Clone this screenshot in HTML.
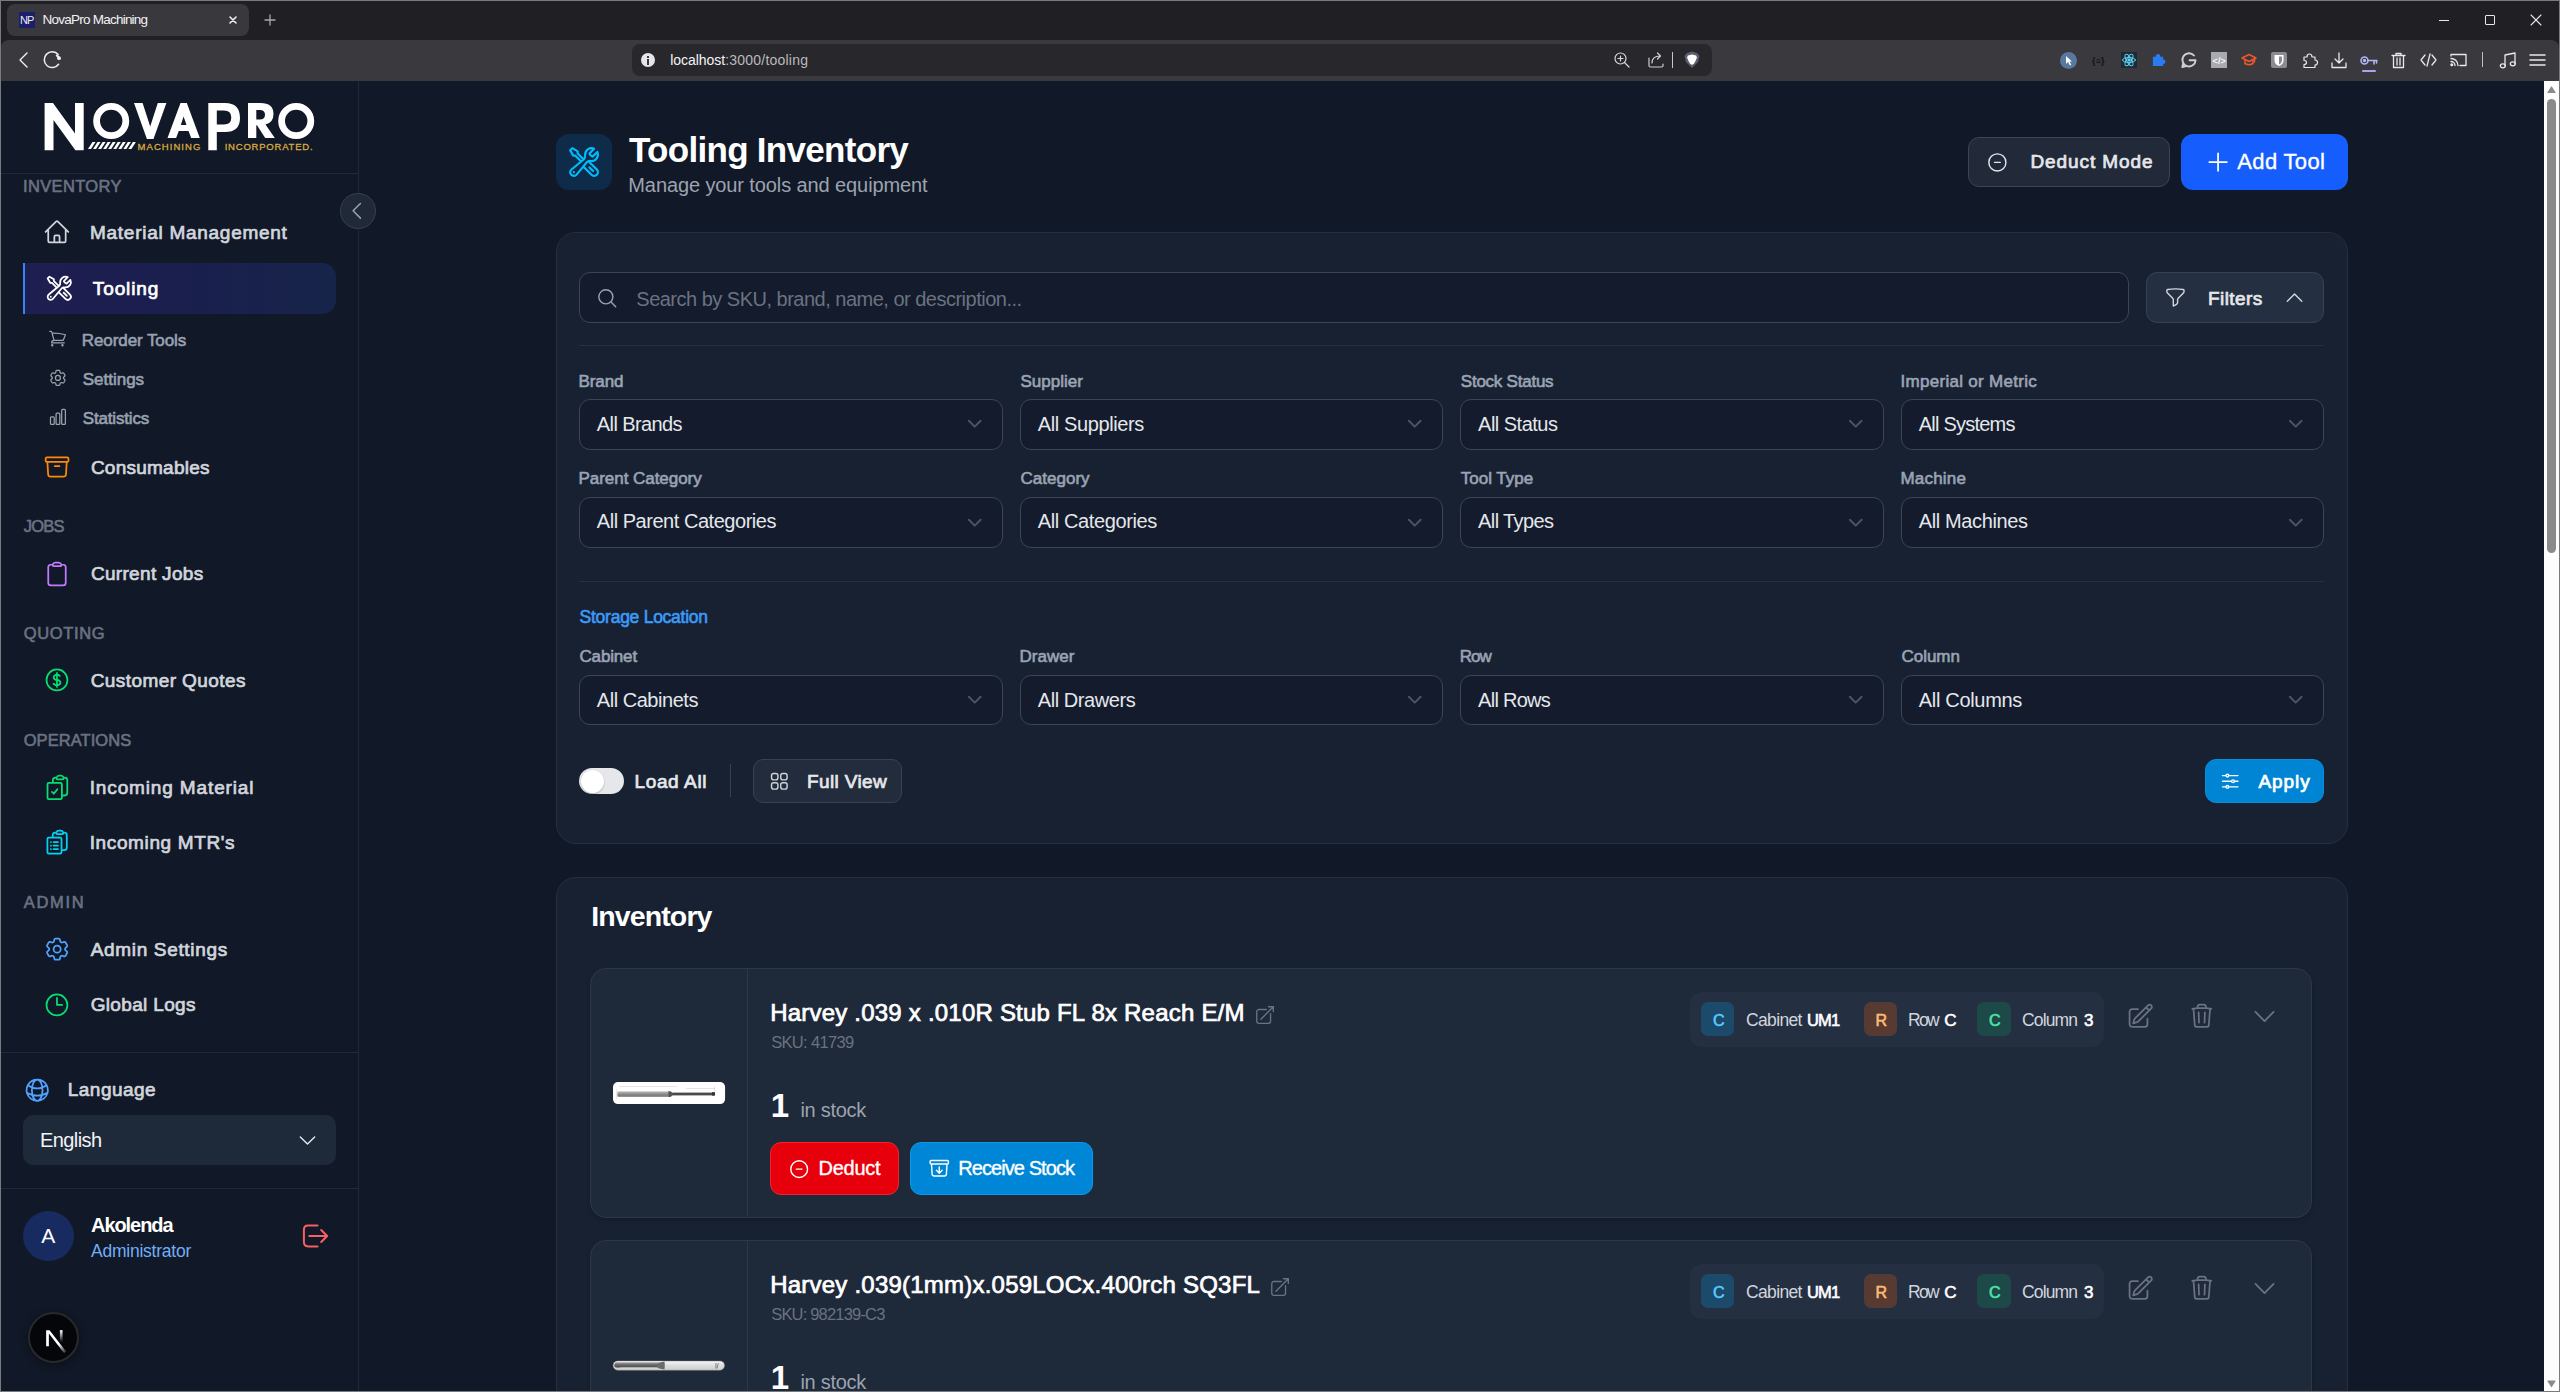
<!DOCTYPE html>
<html><head><meta charset="utf-8"><title>NovaPro Machining</title>
<style>
html,body{margin:0;padding:0;width:2560px;height:1392px;overflow:hidden;background:#111827;font-family:'Liberation Sans',sans-serif;}
.a{position:absolute;box-sizing:border-box;}
.t{white-space:pre;}
svg.a{overflow:visible;}
</style></head><body>
<div class="a " style="left:556.2px;top:134px;width:55.7px;height:55.6px;background:#0e2b4a;border-radius:13px;"></div>
<svg class="a" style="left:566.74px;top:144.59px;width:34.11px;height:34.11px;color:#00bcff;" viewBox="0 0 24 24" fill="none" stroke="currentColor" stroke-width="1.5" stroke-linecap="round" stroke-linejoin="round"><path d="M11.42 15.17 17.25 21A2.652 2.652 0 0 0 21 17.25l-5.877-5.877M11.42 15.17l2.496-3.03c.317-.384.74-.626 1.208-.766M11.42 15.17l-4.655 5.653a2.548 2.548 0 1 1-3.586-3.586l6.837-5.63m5.108-.233c.55-.164 1.163-.188 1.743-.14a4.5 4.5 0 0 0 4.486-6.336l-3.276 3.277a3.004 3.004 0 0 1-2.25-2.25l3.276-3.276a4.5 4.5 0 0 0-6.336 4.486c.091 1.076-.071 2.264-.904 2.95l-.102.085m-1.745 1.437L5.909 7.5H4.5L2.25 3.75l1.5-1.5L7.5 4.5v1.409l4.26 4.26m-1.745 1.437 1.745-1.437m6.615 8.206L15.75 15.75M4.867 19.125h.008v.008h-.008v-.008Z"/></svg>
<div class="a t" style="left:629.00px;top:132px;font-size:35px;line-height:35px;font-weight:700;color:#ffffff;font-family:'Liberation Sans',sans-serif;letter-spacing:-0.703px;">Tooling Inventory</div>
<div class="a t" style="left:628.30px;top:175px;font-size:20px;line-height:20px;font-weight:400;color:#9ca3af;font-family:'Liberation Sans',sans-serif;letter-spacing:-0.102px;">Manage your tools and equipment</div>
<div class="a " style="left:1968.2px;top:137px;width:201.5px;height:50px;background:#222a3a;border:1px solid #3a4555;border-radius:11px;"></div>
<svg class="a" style="left:1985.82px;top:150.72px;width:22.77px;height:22.77px;color:#e5e7eb;" viewBox="0 0 24 24" fill="none" stroke="currentColor" stroke-width="1.5" stroke-linecap="round" stroke-linejoin="round"><path d="M15 12H9m12 0a9 9 0 1 1-18 0 9 9 0 0 1 18 0Z"/></svg>
<div class="a t" style="left:2030.40px;top:152px;font-size:19.0px;line-height:19.0px;font-weight:400;color:#e5e7eb;font-family:'Liberation Sans',sans-serif;-webkit-text-stroke:0.72px #e5e7eb;letter-spacing:0.926px;">Deduct Mode</div>
<div class="a " style="left:2181px;top:134px;width:167px;height:56px;background:#155dfc;border-radius:12px;"></div>
<svg class="a" style="left:2203.88px;top:148.43px;width:28.15px;height:28.15px;color:#ffffff;" viewBox="0 0 24 24" fill="none" stroke="currentColor" stroke-width="1.5" stroke-linecap="round" stroke-linejoin="round"><path d="M12 4.5v15m7.5-7.5h-15"/></svg>
<div class="a t" style="left:2237.30px;top:151px;font-size:22px;line-height:22px;font-weight:400;color:#ffffff;font-family:'Liberation Sans',sans-serif;-webkit-text-stroke:0.35px #ffffff;letter-spacing:0.339px;">Add Tool</div>
<div class="a " style="left:556px;top:232px;width:1792px;height:612px;background:#182131;border:1px solid #252f3f;border-radius:20px;"></div>
<div class="a " style="left:579.2px;top:272px;width:1549.8px;height:51px;background:#131b2c;border:1px solid #3a4555;border-radius:11px;"></div>
<svg class="a" style="left:595.84px;top:286.84px;width:22.52px;height:22.52px;color:#9ca3af;" viewBox="0 0 24 24" fill="none" stroke="currentColor" stroke-width="1.5" stroke-linecap="round" stroke-linejoin="round"><path d="m21 21-5.197-5.197m0 0A7.5 7.5 0 1 0 5.196 5.196a7.5 7.5 0 0 0 10.607 10.607Z"/></svg>
<div class="a t" style="left:636.30px;top:289px;font-size:20px;line-height:20px;font-weight:400;color:#6b7280;font-family:'Liberation Sans',sans-serif;letter-spacing:-0.505px;">Search by SKU, brand, name, or description...</div>
<div class="a " style="left:2146.2px;top:272px;width:177.6px;height:51px;background:#243041;border:1px solid #374151;border-radius:11px;"></div>
<svg class="a" style="left:2163.55px;top:285.65px;width:22.89px;height:22.89px;color:#d1d5db;" viewBox="0 0 24 24" fill="none" stroke="currentColor" stroke-width="1.5" stroke-linecap="round" stroke-linejoin="round"><path d="M12 3c2.755 0 5.455.232 8.083.678.533.09.917.556.917 1.096v1.044a2.25 2.25 0 0 1-.659 1.591l-5.432 5.432a2.25 2.25 0 0 0-.659 1.591v2.927a2.25 2.25 0 0 1-1.244 2.013L9.75 21v-6.568a2.25 2.25 0 0 0-.659-1.591L3.659 7.409A2.25 2.25 0 0 1 3 5.818V4.774c0-.54.384-1.006.917-1.096A48.32 48.32 0 0 1 12 3Z"/></svg>
<div class="a t" style="left:2208.00px;top:289px;font-size:19.0px;line-height:19.0px;font-weight:400;color:#e5e7eb;font-family:'Liberation Sans',sans-serif;-webkit-text-stroke:0.72px #e5e7eb;letter-spacing:0.413px;">Filters</div>
<svg class="a" style="left:2283.45px;top:285.75px;width:23.1px;height:23.1px;color:#d1d5db;" viewBox="0 0 24 24" fill="none" stroke="currentColor" stroke-width="1.5" stroke-linecap="round" stroke-linejoin="round"><path d="m4.5 15.75 7.5-7.5 7.5 7.5"/></svg>
<div class="a " style="left:579px;top:345px;width:1745px;height:1px;background:#263041;"></div>
<div class="a t" style="left:578.50px;top:373px;font-size:17.0px;line-height:17.0px;font-weight:400;color:#9aa4b4;font-family:'Liberation Sans',sans-serif;-webkit-text-stroke:0.61px #9aa4b4;letter-spacing:-0.102px;">Brand</div>
<div class="a " style="left:579px;top:399.2px;width:424px;height:50.5px;background:#131b2c;border:1px solid #3a4555;border-radius:11px;"></div>
<div class="a t" style="left:596.80px;top:414px;font-size:20px;line-height:20px;font-weight:400;color:#e5e7eb;font-family:'Liberation Sans',sans-serif;letter-spacing:-0.595px;">All Brands</div>
<svg class="a" style="left:962.76px;top:412.46px;width:23.49px;height:23.49px;color:#4b5563;" viewBox="0 0 24 24" fill="none" stroke="currentColor" stroke-width="2" stroke-linecap="round" stroke-linejoin="round"><path d="m6 9 6 6 6-6"/></svg>
<div class="a t" style="left:1020.50px;top:373px;font-size:17.0px;line-height:17.0px;font-weight:400;color:#9aa4b4;font-family:'Liberation Sans',sans-serif;-webkit-text-stroke:0.61px #9aa4b4;letter-spacing:0.013px;">Supplier</div>
<div class="a " style="left:1020px;top:399.2px;width:423px;height:50.5px;background:#131b2c;border:1px solid #3a4555;border-radius:11px;"></div>
<div class="a t" style="left:1037.80px;top:414px;font-size:20px;line-height:20px;font-weight:400;color:#e5e7eb;font-family:'Liberation Sans',sans-serif;letter-spacing:-0.389px;">All Suppliers</div>
<svg class="a" style="left:1402.76px;top:412.46px;width:23.49px;height:23.49px;color:#4b5563;" viewBox="0 0 24 24" fill="none" stroke="currentColor" stroke-width="2" stroke-linecap="round" stroke-linejoin="round"><path d="m6 9 6 6 6-6"/></svg>
<div class="a t" style="left:1460.80px;top:373px;font-size:17.0px;line-height:17.0px;font-weight:400;color:#9aa4b4;font-family:'Liberation Sans',sans-serif;-webkit-text-stroke:0.61px #9aa4b4;letter-spacing:-0.239px;">Stock Status</div>
<div class="a " style="left:1460.3px;top:399.2px;width:423.7px;height:50.5px;background:#131b2c;border:1px solid #3a4555;border-radius:11px;"></div>
<div class="a t" style="left:1478.10px;top:414px;font-size:20px;line-height:20px;font-weight:400;color:#e5e7eb;font-family:'Liberation Sans',sans-serif;letter-spacing:-0.520px;">All Status</div>
<svg class="a" style="left:1843.76px;top:412.46px;width:23.49px;height:23.49px;color:#4b5563;" viewBox="0 0 24 24" fill="none" stroke="currentColor" stroke-width="2" stroke-linecap="round" stroke-linejoin="round"><path d="m6 9 6 6 6-6"/></svg>
<div class="a t" style="left:1900.50px;top:373px;font-size:17.0px;line-height:17.0px;font-weight:400;color:#9aa4b4;font-family:'Liberation Sans',sans-serif;-webkit-text-stroke:0.61px #9aa4b4;letter-spacing:0.294px;">Imperial or Metric</div>
<div class="a " style="left:1901px;top:399.2px;width:423px;height:50.5px;background:#131b2c;border:1px solid #3a4555;border-radius:11px;"></div>
<div class="a t" style="left:1918.80px;top:414px;font-size:20px;line-height:20px;font-weight:400;color:#e5e7eb;font-family:'Liberation Sans',sans-serif;letter-spacing:-0.786px;">All Systems</div>
<svg class="a" style="left:2283.76px;top:412.46px;width:23.49px;height:23.49px;color:#4b5563;" viewBox="0 0 24 24" fill="none" stroke="currentColor" stroke-width="2" stroke-linecap="round" stroke-linejoin="round"><path d="m6 9 6 6 6-6"/></svg>
<div class="a t" style="left:578.50px;top:470px;font-size:17.0px;line-height:17.0px;font-weight:400;color:#9aa4b4;font-family:'Liberation Sans',sans-serif;-webkit-text-stroke:0.61px #9aa4b4;letter-spacing:-0.042px;">Parent Category</div>
<div class="a " style="left:579px;top:497.3px;width:424px;height:50.3px;background:#131b2c;border:1px solid #3a4555;border-radius:11px;"></div>
<div class="a t" style="left:596.80px;top:511px;font-size:20px;line-height:20px;font-weight:400;color:#e5e7eb;font-family:'Liberation Sans',sans-serif;letter-spacing:-0.464px;">All Parent Categories</div>
<svg class="a" style="left:962.76px;top:510.56px;width:23.49px;height:23.49px;color:#4b5563;" viewBox="0 0 24 24" fill="none" stroke="currentColor" stroke-width="2" stroke-linecap="round" stroke-linejoin="round"><path d="m6 9 6 6 6-6"/></svg>
<div class="a t" style="left:1020.50px;top:470px;font-size:17.0px;line-height:17.0px;font-weight:400;color:#9aa4b4;font-family:'Liberation Sans',sans-serif;-webkit-text-stroke:0.61px #9aa4b4;letter-spacing:0.017px;">Category</div>
<div class="a " style="left:1020px;top:497.3px;width:423px;height:50.3px;background:#131b2c;border:1px solid #3a4555;border-radius:11px;"></div>
<div class="a t" style="left:1037.80px;top:511px;font-size:20px;line-height:20px;font-weight:400;color:#e5e7eb;font-family:'Liberation Sans',sans-serif;letter-spacing:-0.392px;">All Categories</div>
<svg class="a" style="left:1402.76px;top:510.56px;width:23.49px;height:23.49px;color:#4b5563;" viewBox="0 0 24 24" fill="none" stroke="currentColor" stroke-width="2" stroke-linecap="round" stroke-linejoin="round"><path d="m6 9 6 6 6-6"/></svg>
<div class="a t" style="left:1460.80px;top:470px;font-size:17.0px;line-height:17.0px;font-weight:400;color:#9aa4b4;font-family:'Liberation Sans',sans-serif;-webkit-text-stroke:0.61px #9aa4b4;letter-spacing:-0.014px;">Tool Type</div>
<div class="a " style="left:1460.3px;top:497.3px;width:423.7px;height:50.3px;background:#131b2c;border:1px solid #3a4555;border-radius:11px;"></div>
<div class="a t" style="left:1478.10px;top:511px;font-size:20px;line-height:20px;font-weight:400;color:#e5e7eb;font-family:'Liberation Sans',sans-serif;letter-spacing:-0.618px;">All Types</div>
<svg class="a" style="left:1843.76px;top:510.56px;width:23.49px;height:23.49px;color:#4b5563;" viewBox="0 0 24 24" fill="none" stroke="currentColor" stroke-width="2" stroke-linecap="round" stroke-linejoin="round"><path d="m6 9 6 6 6-6"/></svg>
<div class="a t" style="left:1900.50px;top:470px;font-size:17.0px;line-height:17.0px;font-weight:400;color:#9aa4b4;font-family:'Liberation Sans',sans-serif;-webkit-text-stroke:0.61px #9aa4b4;letter-spacing:0.183px;">Machine</div>
<div class="a " style="left:1901px;top:497.3px;width:423px;height:50.3px;background:#131b2c;border:1px solid #3a4555;border-radius:11px;"></div>
<div class="a t" style="left:1918.80px;top:511px;font-size:20px;line-height:20px;font-weight:400;color:#e5e7eb;font-family:'Liberation Sans',sans-serif;letter-spacing:-0.380px;">All Machines</div>
<svg class="a" style="left:2283.76px;top:510.56px;width:23.49px;height:23.49px;color:#4b5563;" viewBox="0 0 24 24" fill="none" stroke="currentColor" stroke-width="2" stroke-linecap="round" stroke-linejoin="round"><path d="m6 9 6 6 6-6"/></svg>
<div class="a " style="left:579px;top:581px;width:1745px;height:1px;background:#263041;"></div>
<div class="a t" style="left:579.60px;top:609px;font-size:17.5px;line-height:17.5px;font-weight:400;color:#3b9bf8;font-family:'Liberation Sans',sans-serif;-webkit-text-stroke:0.61px #3b9bf8;letter-spacing:-0.259px;">Storage Location</div>
<div class="a t" style="left:579.50px;top:648px;font-size:17.0px;line-height:17.0px;font-weight:400;color:#9aa4b4;font-family:'Liberation Sans',sans-serif;-webkit-text-stroke:0.61px #9aa4b4;letter-spacing:-0.162px;">Cabinet</div>
<div class="a " style="left:579px;top:675px;width:424px;height:49.7px;background:#131b2c;border:1px solid #3a4555;border-radius:11px;"></div>
<div class="a t" style="left:596.80px;top:690px;font-size:20px;line-height:20px;font-weight:400;color:#e5e7eb;font-family:'Liberation Sans',sans-serif;letter-spacing:-0.465px;">All Cabinets</div>
<svg class="a" style="left:962.76px;top:688.26px;width:23.49px;height:23.49px;color:#4b5563;" viewBox="0 0 24 24" fill="none" stroke="currentColor" stroke-width="2" stroke-linecap="round" stroke-linejoin="round"><path d="m6 9 6 6 6-6"/></svg>
<div class="a t" style="left:1019.50px;top:648px;font-size:17.0px;line-height:17.0px;font-weight:400;color:#9aa4b4;font-family:'Liberation Sans',sans-serif;-webkit-text-stroke:0.61px #9aa4b4;letter-spacing:0.015px;">Drawer</div>
<div class="a " style="left:1020px;top:675px;width:423px;height:49.7px;background:#131b2c;border:1px solid #3a4555;border-radius:11px;"></div>
<div class="a t" style="left:1037.80px;top:690px;font-size:20px;line-height:20px;font-weight:400;color:#e5e7eb;font-family:'Liberation Sans',sans-serif;letter-spacing:-0.434px;">All Drawers</div>
<svg class="a" style="left:1402.76px;top:688.26px;width:23.49px;height:23.49px;color:#4b5563;" viewBox="0 0 24 24" fill="none" stroke="currentColor" stroke-width="2" stroke-linecap="round" stroke-linejoin="round"><path d="m6 9 6 6 6-6"/></svg>
<div class="a t" style="left:1459.80px;top:648px;font-size:17.0px;line-height:17.0px;font-weight:400;color:#9aa4b4;font-family:'Liberation Sans',sans-serif;-webkit-text-stroke:0.61px #9aa4b4;letter-spacing:-1.016px;">Row</div>
<div class="a " style="left:1460.3px;top:675px;width:423.7px;height:49.7px;background:#131b2c;border:1px solid #3a4555;border-radius:11px;"></div>
<div class="a t" style="left:1478.10px;top:690px;font-size:20px;line-height:20px;font-weight:400;color:#e5e7eb;font-family:'Liberation Sans',sans-serif;letter-spacing:-0.728px;">All Rows</div>
<svg class="a" style="left:1843.76px;top:688.26px;width:23.49px;height:23.49px;color:#4b5563;" viewBox="0 0 24 24" fill="none" stroke="currentColor" stroke-width="2" stroke-linecap="round" stroke-linejoin="round"><path d="m6 9 6 6 6-6"/></svg>
<div class="a t" style="left:1901.50px;top:648px;font-size:17.0px;line-height:17.0px;font-weight:400;color:#9aa4b4;font-family:'Liberation Sans',sans-serif;-webkit-text-stroke:0.61px #9aa4b4;letter-spacing:-0.025px;">Column</div>
<div class="a " style="left:1901px;top:675px;width:423px;height:49.7px;background:#131b2c;border:1px solid #3a4555;border-radius:11px;"></div>
<div class="a t" style="left:1918.80px;top:690px;font-size:20px;line-height:20px;font-weight:400;color:#e5e7eb;font-family:'Liberation Sans',sans-serif;letter-spacing:-0.320px;">All Columns</div>
<svg class="a" style="left:2283.76px;top:688.26px;width:23.49px;height:23.49px;color:#4b5563;" viewBox="0 0 24 24" fill="none" stroke="currentColor" stroke-width="2" stroke-linecap="round" stroke-linejoin="round"><path d="m6 9 6 6 6-6"/></svg>
<div class="a " style="left:579.2px;top:768.2px;width:44.6px;height:25.5px;background:#e5e7eb;border-radius:13px;"></div>
<div class="a " style="left:580.5px;top:769.5px;width:23px;height:23px;background:#ffffff;border-radius:50%;box-shadow:0 1px 2px rgba(0,0,0,.25);"></div>
<div class="a t" style="left:634.50px;top:772px;font-size:19.0px;line-height:19.0px;font-weight:400;color:#e5e7eb;font-family:'Liberation Sans',sans-serif;-webkit-text-stroke:0.72px #e5e7eb;letter-spacing:0.623px;">Load All</div>
<div class="a " style="left:729.5px;top:764px;width:1px;height:33.3px;background:#374151;"></div>
<div class="a " style="left:753.2px;top:759px;width:148.4px;height:43.7px;background:#222c3c;border:1px solid #374151;border-radius:10px;"></div>
<svg class="a" style="left:768.02px;top:770.22px;width:22.67px;height:22.67px;color:#d1d5db;" viewBox="0 0 24 24" fill="none" stroke="currentColor" stroke-width="1.5" stroke-linecap="round" stroke-linejoin="round"><path d="M3.75 6A2.25 2.25 0 0 1 6 3.75h2.25A2.25 2.25 0 0 1 10.5 6v2.25a2.25 2.25 0 0 1-2.25 2.25H6a2.25 2.25 0 0 1-2.25-2.25V6ZM3.75 15.75A2.25 2.25 0 0 1 6 13.5h2.25a2.25 2.25 0 0 1 2.25 2.25V18a2.25 2.25 0 0 1-2.25 2.25H6A2.25 2.25 0 0 1 3.75 18v-2.25ZM13.5 6a2.25 2.25 0 0 1 2.25-2.25H18A2.25 2.25 0 0 1 20.25 6v2.25A2.25 2.25 0 0 1 18 10.5h-2.25a2.25 2.25 0 0 1-2.25-2.25V6ZM13.5 15.75a2.25 2.25 0 0 1 2.25-2.25H18a2.25 2.25 0 0 1 2.25 2.25V18A2.25 2.25 0 0 1 18 20.25h-2.25A2.25 2.25 0 0 1 13.5 18v-2.25Z"/></svg>
<div class="a t" style="left:807.10px;top:772px;font-size:19.0px;line-height:19.0px;font-weight:400;color:#e5e7eb;font-family:'Liberation Sans',sans-serif;-webkit-text-stroke:0.72px #e5e7eb;letter-spacing:0.361px;">Full View</div>
<div class="a " style="left:2205px;top:758.8px;width:119px;height:44.2px;background:#0084d4;border:1px solid #078fdd;border-radius:11px;"></div>
<svg class="a" style="left:2219.06px;top:769.81px;width:22.48px;height:22.48px;color:#ffffff;" viewBox="0 0 24 24" fill="none" stroke="currentColor" stroke-width="1.5" stroke-linecap="round" stroke-linejoin="round"><path d="M10.5 6h9.75M10.5 6a1.5 1.5 0 1 1-3 0m3 0a1.5 1.5 0 1 0-3 0M3.75 6H7.5m3 12h9.75m-9.75 0a1.5 1.5 0 0 1-3 0m3 0a1.5 1.5 0 0 0-3 0m-3.75 0H7.5m9-6h3.75m-3.75 0a1.5 1.5 0 0 1-3 0m3 0a1.5 1.5 0 0 0-3 0m-9.75 0h9.75"/></svg>
<div class="a t" style="left:2258.40px;top:772px;font-size:19.0px;line-height:19.0px;font-weight:400;color:#ffffff;font-family:'Liberation Sans',sans-serif;-webkit-text-stroke:0.72px #ffffff;letter-spacing:0.943px;">Apply</div>
<div class="a " style="left:556.4px;top:877.3px;width:1791.6px;height:600px;background:#182131;border:1px solid #252f3f;border-radius:20px;"></div>
<div class="a t" style="left:591.20px;top:902px;font-size:28.5px;line-height:28.5px;font-weight:700;color:#ffffff;font-family:'Liberation Sans',sans-serif;letter-spacing:-0.878px;">Inventory</div>
<div class="a " style="left:590.4px;top:968px;width:1721.6px;height:250px;background:#1e293a;border:1px solid #2c3749;border-radius:16px;box-shadow:0 2px 4px rgba(0,0,0,.18);"></div>
<div class="a " style="left:746.7px;top:969px;width:1px;height:247px;background:#2c3749;"></div>
<div class="a t" style="left:770.20px;top:1001px;font-size:24.0px;line-height:24.0px;font-weight:400;color:#ffffff;font-family:'Liberation Sans',sans-serif;-webkit-text-stroke:0.72px #ffffff;letter-spacing:0.213px;">Harvey .039 x .010R Stub FL 8x Reach E/M</div>
<svg class="a" style="left:1254.1px;top:1003.95px;width:22.09px;height:22.09px;color:#6b7280;" viewBox="0 0 24 24" fill="none" stroke="currentColor" stroke-width="1.5" stroke-linecap="round" stroke-linejoin="round"><path d="M13.5 6H5.25A2.25 2.25 0 0 0 3 8.25v10.5A2.25 2.25 0 0 0 5.25 21h10.5A2.25 2.25 0 0 0 18 18.75V10.5m-10.5 6L21 3m0 0h-5.25M21 3v5.25"/></svg>
<div class="a t" style="left:771.20px;top:1034px;font-size:16.5px;line-height:16.5px;font-weight:400;color:#6b7280;font-family:'Liberation Sans',sans-serif;letter-spacing:-0.667px;">SKU: 41739</div>
<div class="a t" style="left:770.70px;top:1089px;font-size:33px;line-height:33px;font-weight:700;color:#ffffff;font-family:'Liberation Sans',sans-serif;">1</div>
<div class="a t" style="left:800.40px;top:1100px;font-size:20px;line-height:20px;font-weight:400;color:#9ca3af;font-family:'Liberation Sans',sans-serif;letter-spacing:-0.272px;">in stock</div>
<div class="a " style="left:769.7px;top:1142.3px;width:129px;height:52.3px;background:#e7000b;border:1px solid #f2232d;border-radius:11px;"></div>
<svg class="a" style="left:787.88px;top:1157.63px;width:22.34px;height:22.34px;color:#ffffff;" viewBox="0 0 24 24" fill="none" stroke="currentColor" stroke-width="1.5" stroke-linecap="round" stroke-linejoin="round"><path d="M15 12H9m12 0a9 9 0 1 1-18 0 9 9 0 0 1 18 0Z"/></svg>
<div class="a t" style="left:818.60px;top:1158px;font-size:20px;line-height:20px;font-weight:400;color:#ffffff;font-family:'Liberation Sans',sans-serif;-webkit-text-stroke:0.35px #ffffff;letter-spacing:-0.283px;">Deduct</div>
<div class="a " style="left:910.4px;top:1142.3px;width:183.1px;height:52.3px;background:#0086d6;border:1px solid #0a9bec;border-radius:11px;"></div>
<svg class="a" style="left:927.93px;top:1157.23px;width:22.53px;height:22.53px;color:#ffffff;" viewBox="0 0 24 24" fill="none" stroke="currentColor" stroke-width="1.5" stroke-linecap="round" stroke-linejoin="round"><path d="m20.25 7.5-.625 10.632a2.25 2.25 0 0 1-2.247 2.118H6.622a2.25 2.25 0 0 1-2.247-2.118L3.75 7.5m8.25 3v6.75m0 0-3-3m3 3 3-3M3.375 7.5h17.25c.621 0 1.125-.504 1.125-1.125v-1.5c0-.621-.504-1.125-1.125-1.125H3.375c-.621 0-1.125.504-1.125 1.125v1.5c0 .621.504 1.125 1.125 1.125Z"/></svg>
<div class="a t" style="left:958.30px;top:1158px;font-size:20px;line-height:20px;font-weight:400;color:#ffffff;font-family:'Liberation Sans',sans-serif;-webkit-text-stroke:0.35px #ffffff;letter-spacing:-0.928px;">Receive Stock</div>
<div class="a " style="left:1690px;top:991.5px;width:414.4px;height:55.2px;background:#243042;border-radius:12px;"></div>
<div class="a " style="left:1700.7px;top:1002px;width:33.2px;height:33.8px;background:#1b4a6b;border-radius:7px;"></div>
<div class="a t" style="left:1712.90px;top:1013px;font-size:16.0px;line-height:16.0px;font-weight:400;color:#5ac8fa;font-family:'Liberation Sans',sans-serif;-webkit-text-stroke:0.61px #5ac8fa;">C</div>
<div class="a t" style="left:1746.10px;top:1012px;font-size:17.5px;line-height:17.5px;font-weight:400;color:#d1d5db;font-family:'Liberation Sans',sans-serif;letter-spacing:-0.676px;">Cabinet</div>
<div class="a t" style="left:1806.90px;top:1012px;font-size:16.5px;line-height:16.5px;font-weight:400;color:#ffffff;font-family:'Liberation Sans',sans-serif;-webkit-text-stroke:0.61px #ffffff;letter-spacing:-0.730px;">UM1</div>
<div class="a " style="left:1864px;top:1002px;width:33px;height:33.8px;background:#573a31;border-radius:7px;"></div>
<div class="a t" style="left:1875.40px;top:1013px;font-size:16.0px;line-height:16.0px;font-weight:400;color:#fdba74;font-family:'Liberation Sans',sans-serif;-webkit-text-stroke:0.61px #fdba74;">R</div>
<div class="a t" style="left:1908.00px;top:1012px;font-size:17.5px;line-height:17.5px;font-weight:400;color:#d1d5db;font-family:'Liberation Sans',sans-serif;letter-spacing:-1.685px;">Row</div>
<div class="a t" style="left:1944.20px;top:1012px;font-size:17.0px;line-height:17.0px;font-weight:400;color:#ffffff;font-family:'Liberation Sans',sans-serif;-webkit-text-stroke:0.61px #ffffff;">C</div>
<div class="a " style="left:1977px;top:1002px;width:33.7px;height:33.8px;background:#1d4948;border-radius:7px;"></div>
<div class="a t" style="left:1989.00px;top:1013px;font-size:16.0px;line-height:16.0px;font-weight:400;color:#4fe3a5;font-family:'Liberation Sans',sans-serif;-webkit-text-stroke:0.61px #4fe3a5;">C</div>
<div class="a t" style="left:2022.00px;top:1012px;font-size:17.5px;line-height:17.5px;font-weight:400;color:#d1d5db;font-family:'Liberation Sans',sans-serif;letter-spacing:-0.854px;">Column</div>
<div class="a t" style="left:2084.00px;top:1012px;font-size:17.0px;line-height:17.0px;font-weight:400;color:#ffffff;font-family:'Liberation Sans',sans-serif;-webkit-text-stroke:0.61px #ffffff;">3</div>
<svg class="a" style="left:2126.37px;top:1002.06px;width:28.56px;height:28.56px;color:#6b7280;" viewBox="0 0 24 24" fill="none" stroke="currentColor" stroke-width="1.5" stroke-linecap="round" stroke-linejoin="round"><path d="m16.862 4.487 1.687-1.688a1.875 1.875 0 1 1 2.652 2.652L10.582 16.07a4.5 4.5 0 0 1-1.897 1.13L6 18l.8-2.685a4.5 4.5 0 0 1 1.13-1.897l8.932-8.931Zm0 0L19.5 7.125M18 14v4.75A2.25 2.25 0 0 1 15.75 21H5.25A2.25 2.25 0 0 1 3 18.75V8.25A2.25 2.25 0 0 1 5.25 6H10"/></svg>
<svg class="a" style="left:2188.47px;top:1002.37px;width:27.55px;height:27.55px;color:#6b7280;" viewBox="0 0 24 24" fill="none" stroke="currentColor" stroke-width="1.5" stroke-linecap="round" stroke-linejoin="round"><path d="m14.74 9-.346 9m-4.788 0L9.26 9m9.968-3.21c.342.052.682.107 1.022.166m-1.022-.165L18.16 19.673a2.25 2.25 0 0 1-2.244 2.077H8.084a2.25 2.25 0 0 1-2.244-2.077L4.772 5.79m14.456 0a48.108 48.108 0 0 0-3.478-.397m-12 .562c.34-.059.68-.114 1.022-.165m0 0a48.11 48.11 0 0 1 3.478-.397m7.5 0v-.916c0-1.18-.91-2.164-2.09-2.201a51.964 51.964 0 0 0-3.32 0c-1.18.037-2.09 1.022-2.09 2.201v.916m7.5 0a48.667 48.667 0 0 0-7.5 0"/></svg>
<svg class="a" style="left:2250.18px;top:1001.58px;width:29.04px;height:29.04px;color:#6b7280;" viewBox="0 0 24 24" fill="none" stroke="currentColor" stroke-width="1.5" stroke-linecap="round" stroke-linejoin="round"><path d="m19.5 8.25-7.5 7.5-7.5-7.5"/></svg>
<div class="a " style="left:590.4px;top:1240px;width:1721.6px;height:250px;background:#1e293a;border:1px solid #2c3749;border-radius:16px;box-shadow:0 2px 4px rgba(0,0,0,.18);"></div>
<div class="a " style="left:746.7px;top:1241px;width:1px;height:247px;background:#2c3749;"></div>
<div class="a t" style="left:770.20px;top:1273px;font-size:24.0px;line-height:24.0px;font-weight:400;color:#ffffff;font-family:'Liberation Sans',sans-serif;-webkit-text-stroke:0.72px #ffffff;letter-spacing:0.222px;">Harvey .039(1mm)x.059LOCx.400rch SQ3FL</div>
<svg class="a" style="left:1269.3px;top:1275.95px;width:22.09px;height:22.09px;color:#6b7280;" viewBox="0 0 24 24" fill="none" stroke="currentColor" stroke-width="1.5" stroke-linecap="round" stroke-linejoin="round"><path d="M13.5 6H5.25A2.25 2.25 0 0 0 3 8.25v10.5A2.25 2.25 0 0 0 5.25 21h10.5A2.25 2.25 0 0 0 18 18.75V10.5m-10.5 6L21 3m0 0h-5.25M21 3v5.25"/></svg>
<div class="a t" style="left:771.20px;top:1306px;font-size:16.5px;line-height:16.5px;font-weight:400;color:#6b7280;font-family:'Liberation Sans',sans-serif;letter-spacing:-0.813px;">SKU: 982139-C3</div>
<div class="a t" style="left:770.70px;top:1361px;font-size:33px;line-height:33px;font-weight:700;color:#ffffff;font-family:'Liberation Sans',sans-serif;">1</div>
<div class="a t" style="left:800.40px;top:1372px;font-size:20px;line-height:20px;font-weight:400;color:#9ca3af;font-family:'Liberation Sans',sans-serif;letter-spacing:-0.272px;">in stock</div>
<div class="a " style="left:1690px;top:1263.5px;width:414.4px;height:55.2px;background:#243042;border-radius:12px;"></div>
<div class="a " style="left:1700.7px;top:1274px;width:33.2px;height:33.8px;background:#1b4a6b;border-radius:7px;"></div>
<div class="a t" style="left:1712.90px;top:1285px;font-size:16.0px;line-height:16.0px;font-weight:400;color:#5ac8fa;font-family:'Liberation Sans',sans-serif;-webkit-text-stroke:0.61px #5ac8fa;">C</div>
<div class="a t" style="left:1746.10px;top:1284px;font-size:17.5px;line-height:17.5px;font-weight:400;color:#d1d5db;font-family:'Liberation Sans',sans-serif;letter-spacing:-0.676px;">Cabinet</div>
<div class="a t" style="left:1806.90px;top:1284px;font-size:16.5px;line-height:16.5px;font-weight:400;color:#ffffff;font-family:'Liberation Sans',sans-serif;-webkit-text-stroke:0.61px #ffffff;letter-spacing:-0.730px;">UM1</div>
<div class="a " style="left:1864px;top:1274px;width:33px;height:33.8px;background:#573a31;border-radius:7px;"></div>
<div class="a t" style="left:1875.40px;top:1285px;font-size:16.0px;line-height:16.0px;font-weight:400;color:#fdba74;font-family:'Liberation Sans',sans-serif;-webkit-text-stroke:0.61px #fdba74;">R</div>
<div class="a t" style="left:1908.00px;top:1284px;font-size:17.5px;line-height:17.5px;font-weight:400;color:#d1d5db;font-family:'Liberation Sans',sans-serif;letter-spacing:-1.685px;">Row</div>
<div class="a t" style="left:1944.20px;top:1284px;font-size:17.0px;line-height:17.0px;font-weight:400;color:#ffffff;font-family:'Liberation Sans',sans-serif;-webkit-text-stroke:0.61px #ffffff;">C</div>
<div class="a " style="left:1977px;top:1274px;width:33.7px;height:33.8px;background:#1d4948;border-radius:7px;"></div>
<div class="a t" style="left:1989.00px;top:1285px;font-size:16.0px;line-height:16.0px;font-weight:400;color:#4fe3a5;font-family:'Liberation Sans',sans-serif;-webkit-text-stroke:0.61px #4fe3a5;">C</div>
<div class="a t" style="left:2022.00px;top:1284px;font-size:17.5px;line-height:17.5px;font-weight:400;color:#d1d5db;font-family:'Liberation Sans',sans-serif;letter-spacing:-0.854px;">Column</div>
<div class="a t" style="left:2084.00px;top:1284px;font-size:17.0px;line-height:17.0px;font-weight:400;color:#ffffff;font-family:'Liberation Sans',sans-serif;-webkit-text-stroke:0.61px #ffffff;">3</div>
<svg class="a" style="left:2126.37px;top:1274.06px;width:28.56px;height:28.56px;color:#6b7280;" viewBox="0 0 24 24" fill="none" stroke="currentColor" stroke-width="1.5" stroke-linecap="round" stroke-linejoin="round"><path d="m16.862 4.487 1.687-1.688a1.875 1.875 0 1 1 2.652 2.652L10.582 16.07a4.5 4.5 0 0 1-1.897 1.13L6 18l.8-2.685a4.5 4.5 0 0 1 1.13-1.897l8.932-8.931Zm0 0L19.5 7.125M18 14v4.75A2.25 2.25 0 0 1 15.75 21H5.25A2.25 2.25 0 0 1 3 18.75V8.25A2.25 2.25 0 0 1 5.25 6H10"/></svg>
<svg class="a" style="left:2188.47px;top:1274.37px;width:27.55px;height:27.55px;color:#6b7280;" viewBox="0 0 24 24" fill="none" stroke="currentColor" stroke-width="1.5" stroke-linecap="round" stroke-linejoin="round"><path d="m14.74 9-.346 9m-4.788 0L9.26 9m9.968-3.21c.342.052.682.107 1.022.166m-1.022-.165L18.16 19.673a2.25 2.25 0 0 1-2.244 2.077H8.084a2.25 2.25 0 0 1-2.244-2.077L4.772 5.79m14.456 0a48.108 48.108 0 0 0-3.478-.397m-12 .562c.34-.059.68-.114 1.022-.165m0 0a48.11 48.11 0 0 1 3.478-.397m7.5 0v-.916c0-1.18-.91-2.164-2.09-2.201a51.964 51.964 0 0 0-3.32 0c-1.18.037-2.09 1.022-2.09 2.201v.916m7.5 0a48.667 48.667 0 0 0-7.5 0"/></svg>
<svg class="a" style="left:2250.18px;top:1273.58px;width:29.04px;height:29.04px;color:#6b7280;" viewBox="0 0 24 24" fill="none" stroke="currentColor" stroke-width="1.5" stroke-linecap="round" stroke-linejoin="round"><path d="m19.5 8.25-7.5 7.5-7.5-7.5"/></svg>
<svg class="a" style="left:612.8px;top:1081.8px;width:112.1px;height:22.1px" viewBox="0 0 112.1 22.1"><defs><linearGradient id="sh1" x1="0" y1="0" x2="0" y2="1"><stop offset="0" stop-color="#c8c8c8"/><stop offset="0.35" stop-color="#9b9b9b"/><stop offset="0.7" stop-color="#7c7c7c"/><stop offset="1" stop-color="#9a9a9a"/></linearGradient></defs><rect x="0" y="0" width="112.1" height="22.1" rx="5" fill="#fff"/><rect x="4.4" y="9.2" width="51" height="5.8" rx="1.2" fill="url(#sh1)"/><path d="M55.2 9.2H57.5L60 11.2V13L57.5 15H55.2Z" fill="#555"/><rect x="59.5" y="10.6" width="42" height="2.8" fill="#4a4a4a"/><rect x="99" y="10.2" width="3" height="3.4" fill="#333"/><path d="M6 4.5H64M73 6.5H102M101.5 4.5V9" stroke="#bbb" stroke-width="0.4" fill="none"/><path d="M3.5 7V17" stroke="#ccc" stroke-width="0.4" fill="none"/></svg>
<svg class="a" style="left:613.1px;top:1360.9px;width:111.6px;height:9.2px" viewBox="0 0 111.6 9.2"><defs><linearGradient id="sh2" x1="0" y1="0" x2="0" y2="1"><stop offset="0" stop-color="#f8f8f8"/><stop offset="0.5" stop-color="#dcdcdc"/><stop offset="1" stop-color="#cfcfcf"/></linearGradient><linearGradient id="sh3" x1="0" y1="0" x2="0" y2="1"><stop offset="0" stop-color="#f0f0f0"/><stop offset="0.3" stop-color="#777"/><stop offset="0.6" stop-color="#555"/><stop offset="1" stop-color="#eee"/></linearGradient></defs><rect x="0" y="0" width="111.6" height="9.2" rx="4.6" fill="url(#sh2)" stroke="#888" stroke-width="0.5"/><path d="M4.6 0.3H50Q55 0.8 51 0.3H51.5V8.9H50Q46 8.9 44 6.5H8Q2 8.5 1 4.6Q2 0.8 4.6 0.3Z" fill="url(#sh3)"/><path d="M44 3.2Q49 0.6 51.5 0.6V8.6Q49 8.6 44 6Z" fill="#6a6a6a"/><path d="M103 2V7.5M105.5 2L104 7.5" stroke="#444" stroke-width="0.6" fill="none"/></svg>
<div class="a " style="left:2544px;top:81px;width:15px;height:1310px;background:#fdfdfd;"></div>
<div class="a " style="left:2547px;top:99px;width:9px;height:454px;background:#8a8a8a;border-radius:4.5px;"></div>
<svg class="a" style="left:2547px;top:85.5px;width:9px;height:7.5px" viewBox="0 0 9 7.5"><path d="M4.5 1L8 6.5H1Z" fill="#8a8a8a" stroke="#8a8a8a" stroke-width="1.2" stroke-linejoin="round"/></svg>
<svg class="a" style="left:2547px;top:1380px;width:9px;height:7.5px" viewBox="0 0 9 7.5"><path d="M1 1H8L4.5 6.5Z" fill="#8a8a8a" stroke="#8a8a8a" stroke-width="1.2" stroke-linejoin="round"/></svg>
<div class="a " style="left:358px;top:81px;width:1px;height:1311px;background:#1e2939;"></div>
<div class="a " style="left:1px;top:173px;width:357px;height:1px;background:#1e2939;"></div>
<svg class="a" style="left:0;top:81px;width:358px;height:92px" viewBox="0 81 358 92">
    <g fill="#fff">
      <path d="M44.6 103H53L75 133.5V103H83.7V150.3H75.4L53.5 120V150.3H44.6Z"/>
      <circle cx="111.2" cy="121" r="14.6" fill="none" stroke="#fff" stroke-width="6.8"/>
      <path d="M134 103H142.6L150.2 126.5L157.8 103H166.4L153.5 139H146.9Z"/>
      <path d="M180.5 103H186.8L199.8 138H191.2L188.5 131H178.8L176.1 138H167.5ZM183.6 116.5L180.8 125H186.5Z"/>
      <path d="M208.3 103H225Q240 103 240 118Q240 132 225 132H216.8V150.3H208.3ZM216.8 110.5V124.5H224Q231.3 124.5 231.3 117.5Q231.3 110.5 224 110.5Z"/>
      <path d="M248 103H260.5Q273.5 103 273.5 114Q273.5 122.5 265.5 124.5L274.8 138H265.2L257 125.3H256.3V138H248ZM256.3 110V119.5H259.8Q265 119.5 265 114.7Q265 110 259.8 110Z"/>
      <circle cx="296.2" cy="121" r="14.6" fill="none" stroke="#fff" stroke-width="6.8"/>
    </g>
    <g fill="#fff"><path d="M88.00 149L92.50 142H95.50L91.00 149Z"/><path d="M93.05 149L97.55 142H100.55L96.05 149Z"/><path d="M98.10 149L102.60 142H105.60L101.10 149Z"/><path d="M103.15 149L107.65 142H110.65L106.15 149Z"/><path d="M108.20 149L112.70 142H115.70L111.20 149Z"/><path d="M113.25 149L117.75 142H120.75L116.25 149Z"/><path d="M118.30 149L122.80 142H125.80L121.30 149Z"/><path d="M123.35 149L127.85 142H130.85L126.35 149Z"/><path d="M128.40 149L132.90 142H135.90L131.40 149Z"/></g>
    </svg>
<div class="a t" style="left:137.50px;top:142px;font-size:9.5px;line-height:9.5px;font-weight:400;color:#d9aa3f;font-family:'Liberation Sans',sans-serif;-webkit-text-stroke:0.30px #d9aa3f;letter-spacing:1.066px;">MACHINING</div>
<div class="a t" style="left:224.70px;top:142px;font-size:9.5px;line-height:9.5px;font-weight:400;color:#d9aa3f;font-family:'Liberation Sans',sans-serif;-webkit-text-stroke:0.30px #d9aa3f;letter-spacing:0.789px;">INCORPORATED.</div>
<div class="a t" style="left:23.00px;top:178px;font-size:16.5px;line-height:16.5px;font-weight:400;color:#6a7282;font-family:'Liberation Sans',sans-serif;-webkit-text-stroke:0.61px #6a7282;letter-spacing:0.355px;">INVENTORY</div>
<div class="a t" style="left:23.80px;top:518px;font-size:16.5px;line-height:16.5px;font-weight:400;color:#6a7282;font-family:'Liberation Sans',sans-serif;-webkit-text-stroke:0.61px #6a7282;letter-spacing:-0.763px;">JOBS</div>
<div class="a t" style="left:23.70px;top:625px;font-size:16.5px;line-height:16.5px;font-weight:400;color:#6a7282;font-family:'Liberation Sans',sans-serif;-webkit-text-stroke:0.61px #6a7282;letter-spacing:0.639px;">QUOTING</div>
<div class="a t" style="left:23.70px;top:732px;font-size:16.5px;line-height:16.5px;font-weight:400;color:#6a7282;font-family:'Liberation Sans',sans-serif;-webkit-text-stroke:0.61px #6a7282;letter-spacing:0.061px;">OPERATIONS</div>
<div class="a t" style="left:23.70px;top:894px;font-size:16.5px;line-height:16.5px;font-weight:400;color:#6a7282;font-family:'Liberation Sans',sans-serif;-webkit-text-stroke:0.61px #6a7282;letter-spacing:1.713px;">ADMIN</div>
<div class="a " style="left:340px;top:193px;width:35.5px;height:35.5px;background:#1f2937;border:1px solid #374151;border-radius:50%;"></div>
<svg class="a" style="left:345.24px;top:199.24px;width:23.52px;height:23.52px;color:#9ca3af;" viewBox="0 0 24 24" fill="none" stroke="currentColor" stroke-width="1.5" stroke-linecap="round" stroke-linejoin="round"><path d="M15.75 19.5 8.25 12l7.5-7.5"/></svg>
<svg class="a" style="left:43.04px;top:217.91px;width:27.91px;height:27.91px;color:#d1d5db;" viewBox="0 0 24 24" fill="none" stroke="currentColor" stroke-width="1.5" stroke-linecap="round" stroke-linejoin="round"><path d="M2.25 12l8.954-8.955c.44-.439 1.152-.439 1.591 0L21.75 12M4.5 9.75v10.125c0 .621.504 1.125 1.125 1.125H9.75v-4.875c0-.621.504-1.125 1.125-1.125h2.25c.621 0 1.125.504 1.125 1.125V21h4.125c.621 0 1.125-.504 1.125-1.125V9.75M8.25 21h8.25"/></svg>
<div class="a t" style="left:90.00px;top:223px;font-size:19.0px;line-height:19.0px;font-weight:400;color:#d1d5dc;font-family:'Liberation Sans',sans-serif;-webkit-text-stroke:0.72px #d1d5dc;letter-spacing:0.729px;">Material Management</div>
<div class="a " style="left:23px;top:263px;width:313.25px;height:51px;background:linear-gradient(90deg,#1f1e50 0%,#1a1f4e 50%,#17244a 100%);border-radius:0 14px 14px 0;"></div>
<div class="a " style="left:23px;top:263px;width:2px;height:51px;background:#3b82f6;"></div>
<svg class="a" style="left:45.21px;top:273.71px;width:28.57px;height:28.57px;color:#ffffff;" viewBox="0 0 24 24" fill="none" stroke="currentColor" stroke-width="1.5" stroke-linecap="round" stroke-linejoin="round"><path d="M11.42 15.17 17.25 21A2.652 2.652 0 0 0 21 17.25l-5.877-5.877M11.42 15.17l2.496-3.03c.317-.384.74-.626 1.208-.766M11.42 15.17l-4.655 5.653a2.548 2.548 0 1 1-3.586-3.586l6.837-5.63m5.108-.233c.55-.164 1.163-.188 1.743-.14a4.5 4.5 0 0 0 4.486-6.336l-3.276 3.277a3.004 3.004 0 0 1-2.25-2.25l3.276-3.276a4.5 4.5 0 0 0-6.336 4.486c.091 1.076-.071 2.264-.904 2.95l-.102.085m-1.745 1.437L5.909 7.5H4.5L2.25 3.75l1.5-1.5L7.5 4.5v1.409l4.26 4.26m-1.745 1.437 1.745-1.437m6.615 8.206L15.75 15.75M4.867 19.125h.008v.008h-.008v-.008Z"/></svg>
<div class="a t" style="left:92.75px;top:279px;font-size:19.0px;line-height:19.0px;font-weight:400;color:#ffffff;font-family:'Liberation Sans',sans-serif;-webkit-text-stroke:0.72px #ffffff;letter-spacing:0.909px;">Tooling</div>
<svg class="a" style="left:48.19px;top:329.2px;width:19.31px;height:19.31px;color:#9ca3af;" viewBox="0 0 24 24" fill="none" stroke="currentColor" stroke-width="1.5" stroke-linecap="round" stroke-linejoin="round"><path d="M2.25 3h1.386c.51 0 .955.343 1.087.835l.383 1.437M7.5 14.25a3 3 0 0 0-3 3h15.75m-12.75-3h11.218c1.121-2.3 2.1-4.684 2.924-7.138a60.114 60.114 0 0 0-16.536-1.84M7.5 14.25 5.106 5.272M6 20.25a.75.75 0 1 1-1.5 0 .75.75 0 0 1 1.5 0Zm12.75 0a.75.75 0 1 1-1.5 0 .75.75 0 0 1 1.5 0Z"/></svg>
<div class="a t" style="left:81.80px;top:332px;font-size:17.0px;line-height:17.0px;font-weight:400;color:#99a1af;font-family:'Liberation Sans',sans-serif;-webkit-text-stroke:0.61px #99a1af;letter-spacing:-0.094px;">Reorder Tools</div>
<svg class="a" style="left:47.78px;top:367.93px;width:19.84px;height:19.84px;color:#9ca3af;" viewBox="0 0 24 24" fill="none" stroke="currentColor" stroke-width="1.5" stroke-linecap="round" stroke-linejoin="round"><path d="M9.594 3.94c.09-.542.56-.94 1.11-.94h2.593c.55 0 1.02.398 1.11.94l.213 1.281c.063.374.313.686.645.87.074.04.147.083.22.127.325.196.72.257 1.075.124l1.217-.456a1.125 1.125 0 0 1 1.37.49l1.296 2.247a1.125 1.125 0 0 1-.26 1.431l-1.003.827c-.293.241-.438.613-.43.992a7.723 7.723 0 0 1 0 .255c-.008.378.137.75.43.991l1.004.827c.424.35.534.955.26 1.43l-1.298 2.247a1.125 1.125 0 0 1-1.369.491l-1.217-.456c-.355-.133-.75-.072-1.076.124a6.47 6.47 0 0 1-.22.128c-.331.183-.581.495-.644.869l-.213 1.281c-.09.543-.56.94-1.11.94h-2.594c-.55 0-1.019-.398-1.11-.94l-.213-1.281c-.062-.374-.312-.686-.644-.87a6.52 6.52 0 0 1-.22-.127c-.325-.196-.72-.257-1.076-.124l-1.217.456a1.125 1.125 0 0 1-1.369-.49l-1.297-2.247a1.125 1.125 0 0 1 .26-1.431l1.004-.827c.292-.24.437-.613.43-.991a6.932 6.932 0 0 1 0-.255c.007-.38-.138-.751-.43-.992l-1.004-.827a1.125 1.125 0 0 1-.26-1.43l1.297-2.247a1.125 1.125 0 0 1 1.37-.491l1.216.456c.356.133.751.072 1.076-.124.072-.044.146-.086.22-.128.332-.183.582-.495.644-.869l.214-1.28Z"/><path d="M15 12a3 3 0 1 1-6 0 3 3 0 0 1 6 0Z"/></svg>
<div class="a t" style="left:82.80px;top:371px;font-size:17.0px;line-height:17.0px;font-weight:400;color:#99a1af;font-family:'Liberation Sans',sans-serif;-webkit-text-stroke:0.61px #99a1af;letter-spacing:-0.018px;">Settings</div>
<svg class="a" style="left:47.76px;top:406.91px;width:19.88px;height:19.88px;color:#9ca3af;" viewBox="0 0 24 24" fill="none" stroke="currentColor" stroke-width="1.5" stroke-linecap="round" stroke-linejoin="round"><path d="M3 13.125C3 12.504 3.504 12 4.125 12h2.25c.621 0 1.125.504 1.125 1.125v6.75C7.5 20.496 6.996 21 6.375 21h-2.25A1.125 1.125 0 0 1 3 19.875v-6.75ZM9.75 8.625c0-.621.504-1.125 1.125-1.125h2.25c.621 0 1.125.504 1.125 1.125v11.25c0 .621-.504 1.125-1.125 1.125h-2.25a1.125 1.125 0 0 1-1.125-1.125V8.625ZM16.5 4.125c0-.621.504-1.125 1.125-1.125h2.25C20.496 3 21 3.504 21 4.125v15.75c0 .621-.504 1.125-1.125 1.125h-2.25a1.125 1.125 0 0 1-1.125-1.125V4.125Z"/></svg>
<div class="a t" style="left:82.80px;top:410px;font-size:17.0px;line-height:17.0px;font-weight:400;color:#99a1af;font-family:'Liberation Sans',sans-serif;-webkit-text-stroke:0.61px #99a1af;letter-spacing:-0.169px;">Statistics</div>
<svg class="a" style="left:43.18px;top:452.83px;width:28.13px;height:28.13px;color:#ff8904;" viewBox="0 0 24 24" fill="none" stroke="currentColor" stroke-width="1.5" stroke-linecap="round" stroke-linejoin="round"><path d="m20.25 7.5-.625 10.632a2.25 2.25 0 0 1-2.247 2.118H6.622a2.25 2.25 0 0 1-2.247-2.118L3.75 7.5M10 11.25h4M3.375 7.5h17.25c.621 0 1.125-.504 1.125-1.125v-1.5c0-.621-.504-1.125-1.125-1.125H3.375c-.621 0-1.125.504-1.125 1.125v1.5c0 .621.504 1.125 1.125 1.125Z"/></svg>
<div class="a t" style="left:90.90px;top:458px;font-size:19.0px;line-height:19.0px;font-weight:400;color:#d1d5dc;font-family:'Liberation Sans',sans-serif;-webkit-text-stroke:0.72px #d1d5dc;letter-spacing:0.243px;">Consumables</div>
<svg class="a" style="left:43.1px;top:559.85px;width:27.99px;height:27.99px;color:#c27aff;" viewBox="0 0 24 24" fill="none" stroke="currentColor" stroke-width="1.5" stroke-linecap="round" stroke-linejoin="round"><path d="M15.666 3.888A2.25 2.25 0 0 0 13.5 2.25h-3c-1.03 0-1.9.693-2.166 1.638m7.332 0c.055.194.084.4.084.612v0a.75.75 0 0 1-.75.75H9a.75.75 0 0 1-.75-.75v0c0-.212.03-.418.084-.612m7.332 0c.646.049 1.288.11 1.927.184 1.1.128 1.907 1.077 1.907 2.185V19.5a2.25 2.25 0 0 1-2.25 2.25H6.75A2.25 2.25 0 0 1 4.5 19.5V6.257c0-1.108.806-2.057 1.907-2.185a48.208 48.208 0 0 1 1.927-.184"/></svg>
<div class="a t" style="left:90.90px;top:564px;font-size:19.0px;line-height:19.0px;font-weight:400;color:#d1d5dc;font-family:'Liberation Sans',sans-serif;-webkit-text-stroke:0.72px #d1d5dc;letter-spacing:0.321px;">Current Jobs</div>
<svg class="a" style="left:43.23px;top:666.33px;width:27.94px;height:27.94px;color:#05df72;" viewBox="0 0 24 24" fill="none" stroke="currentColor" stroke-width="1.5" stroke-linecap="round" stroke-linejoin="round"><path d="M12 6v12m-3-2.818.879.659c1.171.879 3.07.879 4.242 0 1.172-.879 1.172-2.303 0-3.182C13.536 12.219 12.768 12 12 12c-.725 0-1.45-.22-2.003-.659-1.106-.879-1.106-2.303 0-3.182s2.9-.879 4.006 0l.415.33M21 12a9 9 0 1 1-18 0 9 9 0 0 1 18 0Z"/></svg>
<div class="a t" style="left:90.70px;top:671px;font-size:19.0px;line-height:19.0px;font-weight:400;color:#d1d5dc;font-family:'Liberation Sans',sans-serif;-webkit-text-stroke:0.72px #d1d5dc;letter-spacing:0.422px;">Customer Quotes</div>
<svg class="a" style="left:42.85px;top:772.65px;width:28.79px;height:28.79px;color:#05df72;" viewBox="0 0 24 24" fill="none" stroke="currentColor" stroke-width="1.5" stroke-linecap="round" stroke-linejoin="round"><path d="M11.35 3.836c-.065.21-.1.433-.1.664 0 .414.336.75.75.75h4.5a.75.75 0 0 0 .75-.75 2.25 2.25 0 0 0-.1-.664m-5.8 0A2.251 2.251 0 0 1 13.5 2.25H15c1.012 0 1.867.668 2.15 1.586m-5.8 0c-.376.023-.75.05-1.124.08C9.095 4.01 8.25 4.973 8.25 6.108V8.25m8.9-4.414c.376.023.75.05 1.124.08 1.131.094 1.976 1.057 1.976 2.192V16.5A2.25 2.25 0 0 1 18 18.75h-2.25m-7.5-10.5H4.875c-.621 0-1.125.504-1.125 1.125v11.25c0 .621.504 1.125 1.125 1.125h9.75c.621 0 1.125-.504 1.125-1.125V18.75m-7.5-10.5h6.375c.621 0 1.125.504 1.125 1.125v9.375m-8.25-3 1.5 1.5 3-3.75"/></svg>
<div class="a t" style="left:89.70px;top:778px;font-size:19.0px;line-height:19.0px;font-weight:400;color:#d1d5dc;font-family:'Liberation Sans',sans-serif;-webkit-text-stroke:0.72px #d1d5dc;letter-spacing:0.867px;">Incoming Material</div>
<svg class="a" style="left:43.14px;top:827.74px;width:28.22px;height:28.22px;color:#00d3f2;" viewBox="0 0 24 24" fill="none" stroke="currentColor" stroke-width="1.5" stroke-linecap="round" stroke-linejoin="round"><path d="M9 12h3.75M9 15h3.75M9 18h3.75m3 .75H18a2.25 2.25 0 0 0 2.25-2.25V6.108c0-1.135-.845-2.098-1.976-2.192a48.424 48.424 0 0 0-1.123-.08m-5.801 0c-.065.21-.1.433-.1.664 0 .414.336.75.75.75h4.5a.75.75 0 0 0 .75-.75 2.25 2.25 0 0 0-.1-.664m-5.8 0A2.251 2.251 0 0 1 13.5 2.25H15c1.012 0 1.867.668 2.15 1.586m-5.8 0c-.376.023-.75.05-1.124.08C9.095 4.01 8.25 4.973 8.25 6.108V8.25m0 0H4.875c-.621 0-1.125.504-1.125 1.125v11.25c0 .621.504 1.125 1.125 1.125h9.75c.621 0 1.125-.504 1.125-1.125V9.375c0-.621-.504-1.125-1.125-1.125H8.25ZM6.75 12h.008v.008H6.75V12Zm0 3h.008v.008H6.75V15Zm0 3h.008v.008H6.75V18Z"/></svg>
<div class="a t" style="left:89.70px;top:833px;font-size:19.0px;line-height:19.0px;font-weight:400;color:#d1d5dc;font-family:'Liberation Sans',sans-serif;-webkit-text-stroke:0.72px #d1d5dc;letter-spacing:0.627px;">Incoming MTR&#x27;s</div>
<svg class="a" style="left:43.08px;top:934.88px;width:28.25px;height:28.25px;color:#51a2ff;" viewBox="0 0 24 24" fill="none" stroke="currentColor" stroke-width="1.5" stroke-linecap="round" stroke-linejoin="round"><path d="M9.594 3.94c.09-.542.56-.94 1.11-.94h2.593c.55 0 1.02.398 1.11.94l.213 1.281c.063.374.313.686.645.87.074.04.147.083.22.127.325.196.72.257 1.075.124l1.217-.456a1.125 1.125 0 0 1 1.37.49l1.296 2.247a1.125 1.125 0 0 1-.26 1.431l-1.003.827c-.293.241-.438.613-.43.992a7.723 7.723 0 0 1 0 .255c-.008.378.137.75.43.991l1.004.827c.424.35.534.955.26 1.43l-1.298 2.247a1.125 1.125 0 0 1-1.369.491l-1.217-.456c-.355-.133-.75-.072-1.076.124a6.47 6.47 0 0 1-.22.128c-.331.183-.581.495-.644.869l-.213 1.281c-.09.543-.56.94-1.11.94h-2.594c-.55 0-1.019-.398-1.11-.94l-.213-1.281c-.062-.374-.312-.686-.644-.87a6.52 6.52 0 0 1-.22-.127c-.325-.196-.72-.257-1.076-.124l-1.217.456a1.125 1.125 0 0 1-1.369-.49l-1.297-2.247a1.125 1.125 0 0 1 .26-1.431l1.004-.827c.292-.24.437-.613.43-.991a6.932 6.932 0 0 1 0-.255c.007-.38-.138-.751-.43-.992l-1.004-.827a1.125 1.125 0 0 1-.26-1.43l1.297-2.247a1.125 1.125 0 0 1 1.37-.491l1.216.456c.356.133.751.072 1.076-.124.072-.044.146-.086.22-.128.332-.183.582-.495.644-.869l.214-1.28Z"/><path d="M15 12a3 3 0 1 1-6 0 3 3 0 0 1 6 0Z"/></svg>
<div class="a t" style="left:90.70px;top:940px;font-size:19.0px;line-height:19.0px;font-weight:400;color:#d1d5dc;font-family:'Liberation Sans',sans-serif;-webkit-text-stroke:0.72px #d1d5dc;letter-spacing:0.670px;">Admin Settings</div>
<svg class="a" style="left:43.26px;top:990.81px;width:27.88px;height:27.88px;color:#05df72;" viewBox="0 0 24 24" fill="none" stroke="currentColor" stroke-width="1.5" stroke-linecap="round" stroke-linejoin="round"><path d="M12 6v6h4.5m4.5 0a9 9 0 1 1-18 0 9 9 0 0 1 18 0Z"/></svg>
<div class="a t" style="left:90.70px;top:995px;font-size:19.0px;line-height:19.0px;font-weight:400;color:#d1d5dc;font-family:'Liberation Sans',sans-serif;-webkit-text-stroke:0.72px #d1d5dc;letter-spacing:0.340px;">Global Logs</div>
<div class="a " style="left:1px;top:1052px;width:357px;height:1px;background:#1e2939;"></div>
<svg class="a" style="left:22.68px;top:1075.68px;width:28.43px;height:28.43px;color:#51a2ff;" viewBox="0 0 24 24" fill="none" stroke="currentColor" stroke-width="1.5" stroke-linecap="round" stroke-linejoin="round"><path d="M12 21a9.004 9.004 0 0 0 8.716-6.747M12 21a9.004 9.004 0 0 1-8.716-6.747M12 21c2.485 0 4.5-4.03 4.5-9S14.485 3 12 3m0 18c-2.485 0-4.5-4.03-4.5-9S9.515 3 12 3m0 0a8.997 8.997 0 0 1 7.843 4.582M12 3a8.997 8.997 0 0 0-7.843 4.582m15.686 0A11.953 11.953 0 0 1 12 10.5c-2.998 0-5.74-1.1-7.843-2.918m15.686 0A8.959 8.959 0 0 1 21 12c0 .778-.099 1.533-.284 2.253m0 0A17.919 17.919 0 0 1 12 16.5c-3.162 0-6.133-.815-8.716-2.247m0 0A9.015 9.015 0 0 1 3 12c0-1.605.42-3.113 1.157-4.418"/></svg>
<div class="a t" style="left:67.80px;top:1080px;font-size:19.0px;line-height:19.0px;font-weight:400;color:#d1d5dc;font-family:'Liberation Sans',sans-serif;-webkit-text-stroke:0.72px #d1d5dc;letter-spacing:0.462px;">Language</div>
<div class="a " style="left:23.3px;top:1115px;width:312.5px;height:49.7px;background:#1e2939;border-radius:10px;"></div>
<div class="a t" style="left:40.00px;top:1130px;font-size:20px;line-height:20px;font-weight:400;color:#f3f4f6;font-family:'Liberation Sans',sans-serif;letter-spacing:-0.579px;">English</div>
<svg class="a" style="left:296.46px;top:1129.01px;width:22.98px;height:22.98px;color:#e5e7eb;" viewBox="0 0 24 24" fill="none" stroke="currentColor" stroke-width="1.5" stroke-linecap="round" stroke-linejoin="round"><path d="m19.5 8.25-7.5 7.5-7.5-7.5"/></svg>
<div class="a " style="left:1px;top:1188px;width:357px;height:1px;background:#1e2939;"></div>
<div class="a " style="left:23.3px;top:1211px;width:50.5px;height:50px;background:#172b60;border-radius:50%;"></div>
<div class="a t" style="left:41.30px;top:1225px;font-size:21px;line-height:21px;font-weight:400;color:#ffffff;font-family:'Liberation Sans',sans-serif;">A</div>
<div class="a t" style="left:91.00px;top:1215px;font-size:20px;line-height:20px;font-weight:700;color:#ffffff;font-family:'Liberation Sans',sans-serif;letter-spacing:-1.057px;">Akolenda</div>
<div class="a t" style="left:91.00px;top:1243px;font-size:17.5px;line-height:17.5px;font-weight:400;color:#72aef6;font-family:'Liberation Sans',sans-serif;letter-spacing:-0.238px;">Administrator</div>
<svg class="a" style="left:300px;top:1222px;width:32px;height:28px;color:#fa5f62;" viewBox="300 1222 32 28" fill="none" stroke="currentColor" stroke-width="2" stroke-linecap="round" stroke-linejoin="round"><path d="M317.5 1225.6H308.2Q303.9 1225.6 303.9 1229.9V1242.1Q303.9 1246.4 308.2 1246.4H317.5M309.3 1236H327M321.2 1230L327.2 1236L321.2 1242"/></svg>
<div class="a " style="left:28.1px;top:1311.9px;width:51.4px;height:51.4px;background:#04060a;border:2px solid #29292c;border-radius:50%;box-shadow:0 2px 8px rgba(0,0,0,.4);"></div>
<svg class="a" style="left:33.75px;top:1317.75px;width:40.5px;height:40.5px" viewBox="0 0 180 180"><defs><linearGradient id="ng1" x1="109" y1="116.5" x2="144.5" y2="160.5" gradientUnits="userSpaceOnUse"><stop stop-color="#fff"/><stop offset="1" stop-color="#fff" stop-opacity="0"/></linearGradient><linearGradient id="ng2" x1="121" y1="54" x2="120.799" y2="106.875" gradientUnits="userSpaceOnUse"><stop stop-color="#fff"/><stop offset="1" stop-color="#fff" stop-opacity="0"/></linearGradient><clipPath id="ncp"><circle cx="90" cy="90" r="80"/></clipPath></defs><g clip-path="url(#ncp)"><path d="M149.508 157.52L69.142 54H54V125.97H66.1136V69.3836L139.999 164.845C143.333 162.614 146.509 160.165 149.508 157.52Z" fill="url(#ng1)"/><rect x="115" y="54" width="12" height="72" fill="url(#ng2)"/></g></svg>
<div class="a " style="left:0px;top:0px;width:2560px;height:60px;background:#1f1f24;"></div>
<div class="a " style="left:0px;top:0px;width:2560px;height:1px;background:#7a7a7e;"></div>
<div class="a " style="left:7px;top:4px;width:242px;height:32px;background:#39383d;border-radius:8px;"></div>
<div class="a " style="left:19px;top:12px;width:16px;height:16px;background:#1b1f6b;"></div>
<div class="a t" style="left:20.00px;top:15px;font-size:11px;line-height:11px;font-weight:400;color:#e8e8ee;font-family:'Liberation Sans',sans-serif;letter-spacing:-0.944px;">NP</div>
<div class="a t" style="left:42.60px;top:13px;font-size:13.5px;line-height:13.5px;font-weight:400;color:#f2f2f5;font-family:'Liberation Sans',sans-serif;letter-spacing:-0.769px;">NovaPro Machining</div>
<svg class="a" style="left:229px;top:16px;width:8px;height:8px;color:#f0f0f0;" viewBox="0 0 8 8" fill="none" stroke="currentColor" stroke-width="1.6" stroke-linecap="round" stroke-linejoin="round"><path d="M1 1L7 7M7 1L1 7"/></svg>
<svg class="a" style="left:265px;top:15px;width:10px;height:10px;color:#a8a8ac;" viewBox="0 0 10 10" fill="none" stroke="currentColor" stroke-width="1.3" stroke-linecap="round" stroke-linejoin="round"><path d="M5 0V10M0 5H10"/></svg>
<div class="a " style="left:2439px;top:20px;width:10px;height:1px;background:#e8e8e8;"></div>
<div class="a " style="left:2485px;top:15px;width:10px;height:10px;border:1px solid #e8e8e8;border-radius:1px;"></div>
<svg class="a" style="left:2531px;top:15px;width:10px;height:10px;color:#e8e8e8;" viewBox="0 0 10 10" fill="none" stroke="currentColor" stroke-width="1.1" stroke-linecap="round" stroke-linejoin="round"><path d="M0 0L10 10M10 0L0 10"/></svg>
<div class="a " style="left:1px;top:40px;width:2558px;height:41px;background:#3a393e;border-radius:8px 8px 0 0;"></div>
<svg class="a" style="left:19px;top:52px;width:9px;height:16px;color:#f0f0f0;" viewBox="0 0 9 16" fill="none" stroke="currentColor" stroke-width="1.4" stroke-linecap="round" stroke-linejoin="round"><path d="M8 1L1 8L8 15"/></svg>
<svg class="a" style="left:44px;top:51px;width:18px;height:18px;color:#f0f0f0;" viewBox="0 0 18 18" fill="none" stroke="currentColor" stroke-width="1.5" stroke-linecap="round" stroke-linejoin="round"><path d="M14.2 3.6A7.9 7.9 0 1 0 14.6 13.3"/><path d="M12.8 4.5L15.5 7.2" stroke-width="2"/><circle cx="15" cy="7.2" r="1.9" fill="#f0f0f0" stroke="none"/></svg>
<div class="a " style="left:632px;top:44px;width:1080px;height:32px;background:#28282c;border-radius:8px;"></div>
<div class="a " style="left:641px;top:53px;width:14px;height:14px;background:#e6e6ea;border-radius:50%;"></div>
<div class="a " style="left:647px;top:55.5px;width:2px;height:2px;background:#3a3a3e;"></div>
<div class="a " style="left:647px;top:58.5px;width:2px;height:6px;background:#3a3a3e;"></div>
<div class="a t" style="left:670.30px;top:53px;font-size:14px;line-height:14px;font-weight:400;color:#f4f4f6;font-family:'Liberation Sans',sans-serif;letter-spacing:-0.046px;">localhost</div>
<div class="a t" style="left:725.20px;top:53px;font-size:14px;line-height:14px;font-weight:400;color:#b8b8bd;font-family:'Liberation Sans',sans-serif;letter-spacing:0.217px;">:3000/tooling</div>
<svg class="a" style="left:1614px;top:52px;width:16px;height:16px;color:#d8d8dc;" viewBox="0 0 16 16" fill="none" stroke="currentColor" stroke-width="1.2" stroke-linecap="round" stroke-linejoin="round"><circle cx="6.5" cy="6.5" r="5.5"/><path d="M10.5 10.5L15 15M6.5 4V9M4 6.5H9"/></svg>
<svg class="a" style="left:1648px;top:52px;width:16px;height:16px;color:#d0d0d4;" viewBox="0 0 16 16" fill="none" stroke="currentColor" stroke-width="1.2" stroke-linecap="round" stroke-linejoin="round"><path d="M1 6V13.5Q1 15 2.5 15H13.5Q15 15 15 13.5V12"/><path d="M4 11Q4 4 12 4M9.5 1L12.5 4L9.5 7"/></svg>
<div class="a " style="left:1672px;top:52px;width:1px;height:16px;background:#c8c8cc;"></div>
<svg class="a" style="left:1684px;top:51px;width:16px;height:18px;color:#fff;" viewBox="0 0 16 18" fill="none" stroke="none" stroke-width="1.5" stroke-linecap="round" stroke-linejoin="round"><path d="M3 2L8 0.5L13 2L15.5 5L14 11L8 17L2 11L0.5 5Z" fill="#5b5e72"/><path d="M4 4.5L8 3.5L12 4.5L13 6.5L11.5 10L10 12.5L8 14L6 12.5L4.5 10L3 6.5Z" fill="#fff"/></svg>
<div class="a " style="left:2060px;top:52px;width:17px;height:17px;background:#5878a0;border-radius:50%;"></div>
<svg class="a" style="left:2065px;top:55px;width:8px;height:11px;color:#fff;" viewBox="0 0 8 11" fill="none" stroke="none" stroke-width="1.5" stroke-linecap="round" stroke-linejoin="round"><path d="M1 1L1 9L3 7L5 10.5L6.3 9.8L4.5 6.5L7 6.5Z" fill="#fff"/></svg>
<div class="a t" style="left:2092.00px;top:57px;font-size:9px;line-height:9px;font-weight:700;color:#111;font-family:'Liberation Sans',sans-serif;letter-spacing:0.123px;">{≡}</div>
<div class="a " style="left:2121px;top:52px;width:16px;height:16px;background:#1e2a36;"></div>
<svg class="a" style="left:2121px;top:52px;width:16px;height:16px;color:#5ed3f3;" viewBox="0 0 16 16" fill="none" stroke="currentColor" stroke-width="1" stroke-linecap="round" stroke-linejoin="round"><ellipse cx="8" cy="8" rx="6.5" ry="2.5"/><ellipse cx="8" cy="8" rx="6.5" ry="2.5" transform="rotate(60 8 8)"/><ellipse cx="8" cy="8" rx="6.5" ry="2.5" transform="rotate(120 8 8)"/><circle cx="8" cy="8" r="1.2" fill="#5ed3f3"/></svg>
<svg class="a" style="left:2151px;top:53px;width:15px;height:14px;color:#fff;" viewBox="0 0 16 15" fill="none" stroke="none" stroke-width="1.5" stroke-linecap="round" stroke-linejoin="round"><path d="M2 4H5Q5 1 7.5 1Q10 1 10 4H13V7Q15.5 7 15.5 9.5Q15.5 12 13 12V14H2Z" fill="#2a7bf0"/></svg>
<svg class="a" style="left:2181px;top:52px;width:16px;height:16px;color:#d0d0d4;" viewBox="0 0 16 16" fill="none" stroke="currentColor" stroke-width="1.9" stroke-linecap="round" stroke-linejoin="round"><path d="M13 3.5A6.6 6.6 0 1 0 14.6 8.2H8.6"/><path d="M2.2 11.5L1.3 15L5 14" fill="none"/></svg>
<div class="a " style="left:2211px;top:52px;width:16px;height:16px;background:#a9a9b0;"></div>
<div class="a t" style="left:2212.50px;top:57px;font-size:9px;line-height:9px;font-weight:700;color:#f4f4f6;font-family:'Liberation Sans',sans-serif;letter-spacing:0.122px;">&lt;/&gt;</div>
<svg class="a" style="left:2241px;top:53px;width:16px;height:14px;color:#f0582a;" viewBox="0 0 16 14" fill="none" stroke="currentColor" stroke-width="1.5" stroke-linecap="round" stroke-linejoin="round"><path d="M1 5L8 1.5L15 5L8 8.5Z"/><path d="M4 6.5V10.5Q8 13 12 10.5V6.5"/><path d="M13.5 5.5V9"/></svg>
<div class="a " style="left:2271px;top:52px;width:16px;height:16px;background:#8c8c90;border-radius:2px;"></div>
<svg class="a" style="left:2271px;top:52px;width:16px;height:16px;color:#fff;" viewBox="0 0 16 16" fill="none" stroke="none" stroke-width="1.5" stroke-linecap="round" stroke-linejoin="round"><path d="M3.5 3H12.5V8.5Q12.5 12 8 14Q3.5 12 3.5 8.5Z" fill="#fff"/><path d="M8 4.5V12.5Q11 11 11 8.5V4.5Z" fill="#8c8c90"/></svg>
<svg class="a" style="left:2301px;top:52px;width:17px;height:17px;color:#e8e8ec;" viewBox="0 0 17 17" fill="none" stroke="currentColor" stroke-width="1.2" stroke-linecap="round" stroke-linejoin="round"><path d="M3 5H6Q6 2 8.5 2Q11 2 11 5H14V8Q16.5 8 16.5 10.5Q16.5 13 14 13V15.5H3V12.5Q5.5 12.5 5.5 10.5Q5.5 8.5 3 8.5Z"/></svg>
<svg class="a" style="left:2331px;top:52px;width:16px;height:17px;color:#e8e8ec;" viewBox="0 0 16 17" fill="none" stroke="currentColor" stroke-width="1.3" stroke-linecap="round" stroke-linejoin="round"><path d="M8 1V11M4 7L8 11L12 7M1 11V15.5H15V11"/></svg>
<svg class="a" style="left:2360px;top:55px;width:18px;height:11px;color:#b3b3f7;" viewBox="0 0 18 11" fill="none" stroke="currentColor" stroke-width="1.6" stroke-linecap="round" stroke-linejoin="round"><circle cx="4.5" cy="5.5" r="3.5"/><circle cx="4.5" cy="5.5" r="1" fill="#b3b3f7"/><path d="M8 5.5H17M14 5.5V9M16.5 5.5V8"/></svg>
<div class="a " style="left:2362px;top:70px;width:14px;height:2px;background:#a6a6f0;border-radius:1px;"></div>
<svg class="a" style="left:2391px;top:52px;width:15px;height:17px;color:#e8e8ec;" viewBox="0 0 15 17" fill="none" stroke="currentColor" stroke-width="1.3" stroke-linecap="round" stroke-linejoin="round"><path d="M1 3.5H14M5 3.5V1.5H10V3.5M2.5 3.5V15.5H12.5V3.5M6 6V13M9 6V13"/></svg>
<svg class="a" style="left:2420px;top:53px;width:17px;height:14px;color:#e8e8ec;" viewBox="0 0 17 14" fill="none" stroke="currentColor" stroke-width="1.3" stroke-linecap="round" stroke-linejoin="round"><path d="M5 2L1 7L5 12M12 2L16 7L12 12M10 1L7 13"/></svg>
<svg class="a" style="left:2450px;top:53px;width:17px;height:14px;color:#e8e8ec;" viewBox="0 0 17 14" fill="none" stroke="currentColor" stroke-width="1.3" stroke-linecap="round" stroke-linejoin="round"><path d="M1 3V1.5H16V12.5H10"/><path d="M1 5.5A7 7 0 0 1 8 12.5M1 8.5A4 4 0 0 1 5 12.5"/><circle cx="1.8" cy="11.7" r="0.9" fill="#e8e8ec"/></svg>
<div class="a " style="left:2482px;top:52px;width:1px;height:15px;background:#bdbdc2;"></div>
<svg class="a" style="left:2499px;top:52px;width:17px;height:17px;color:#e8e8ec;" viewBox="0 0 17 17" fill="none" stroke="currentColor" stroke-width="1.3" stroke-linecap="round" stroke-linejoin="round"><path d="M6 13.5V3L16 1V11.5"/><ellipse cx="3.8" cy="13.8" rx="2.5" ry="2"/><ellipse cx="13.8" cy="11.8" rx="2.5" ry="2"/></svg>
<svg class="a" style="left:2529px;top:53px;width:17px;height:14px;color:#e8e8ec;" viewBox="0 0 17 14" fill="none" stroke="currentColor" stroke-width="1.5" stroke-linecap="round" stroke-linejoin="round"><path d="M1 2H16M1 7H16M1 12H16"/></svg>
<div class="a " style="left:0px;top:0px;width:1px;height:1392px;background:#7a7a7e;"></div>
<div class="a " style="left:2559px;top:0px;width:1px;height:1392px;background:#7a7a7e;"></div>
<div class="a " style="left:0px;top:1391px;width:2560px;height:1px;background:#7a7a7e;"></div>
</body></html>
